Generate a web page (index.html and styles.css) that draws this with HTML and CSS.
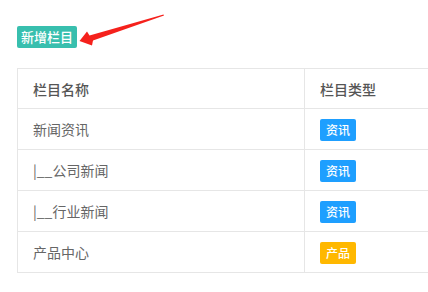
FILE: index.html
```html
<!DOCTYPE html>
<html>
<head>
<meta charset="utf-8">
<link rel="stylesheet" href="styles.css">
</head>
<body>
<div class="page">
  <div class="toolbar">
    <button class="btn-add">新增栏目</button>
  </div>
  <table class="grid">
    <thead>
      <tr><th class="c1">栏目名称</th><th class="c2">栏目类型</th></tr>
    </thead>
    <tbody>
      <tr><td>新闻资讯</td><td><span class="badge blue">资讯</span></td></tr>
      <tr><td>|__公司新闻</td><td><span class="badge blue">资讯</span></td></tr>
      <tr><td>|__行业新闻</td><td><span class="badge blue">资讯</span></td></tr>
      <tr><td>产品中心</td><td><span class="badge orange">产品</span></td></tr>
    </tbody>
  </table>
</div>
<svg class="arrow" width="428" height="60" viewBox="0 0 428 60">
  <polygon fill="#f5211c" points="79.5,41 87,31.5 89.5,35.5 163.5,14.5 164,15.5 93,40.5 92,45.5"/>
</svg>
</body>
</html>
```
FILE: styles.css
```css
html, body {
  margin: 0;
  padding: 0;
  background: #fff;
  overflow: hidden;
  width: 428px;
  height: 292px;
}
body {
  font-family: "Noto Sans CJK SC", "Liberation Sans", sans-serif;
  position: relative;
}
.page {
  padding: 26px 0 0 17px;
}
.toolbar {
  display: flex;
  height: 22px;
  margin-bottom: 20px;
}
.btn-add {
  border: none;
  margin: 0;
  width: 60px;
  height: 22px;
  padding: 0;
  border-radius: 2px;
  background: #38bfae;
  color: #fff;
  font-family: inherit;
  font-size: 13px;
  font-weight: 500;
  line-height: 22px;
  text-align: center;
}
.grid {
  border-collapse: collapse;
  width: 574px;
  table-layout: fixed;
  font-size: 14px;
  color: #666;
}
.grid th, .grid td {
  border: 1px solid #e6e6e6;
  padding: 0 15px;
  text-align: left;
  vertical-align: middle;
}
.grid th {
  height: 39px;
  font-weight: 500;
  color: #555;
}
.grid td {
  height: 40px;
}
.c1, .c2 { width: 256px; }
.badge {
  display: inline-block;
  height: 22px;
  line-height: 22px;
  width: 36px;
  text-align: center;
  border-radius: 2px;
  color: #fff;
  font-size: 12px;
  font-weight: 500;
  vertical-align: middle;
}
.blue { background: #1e9fff; }
.orange { background: #ffb800; }
.arrow {
  position: absolute;
  left: 0;
  top: 0;
}
```
